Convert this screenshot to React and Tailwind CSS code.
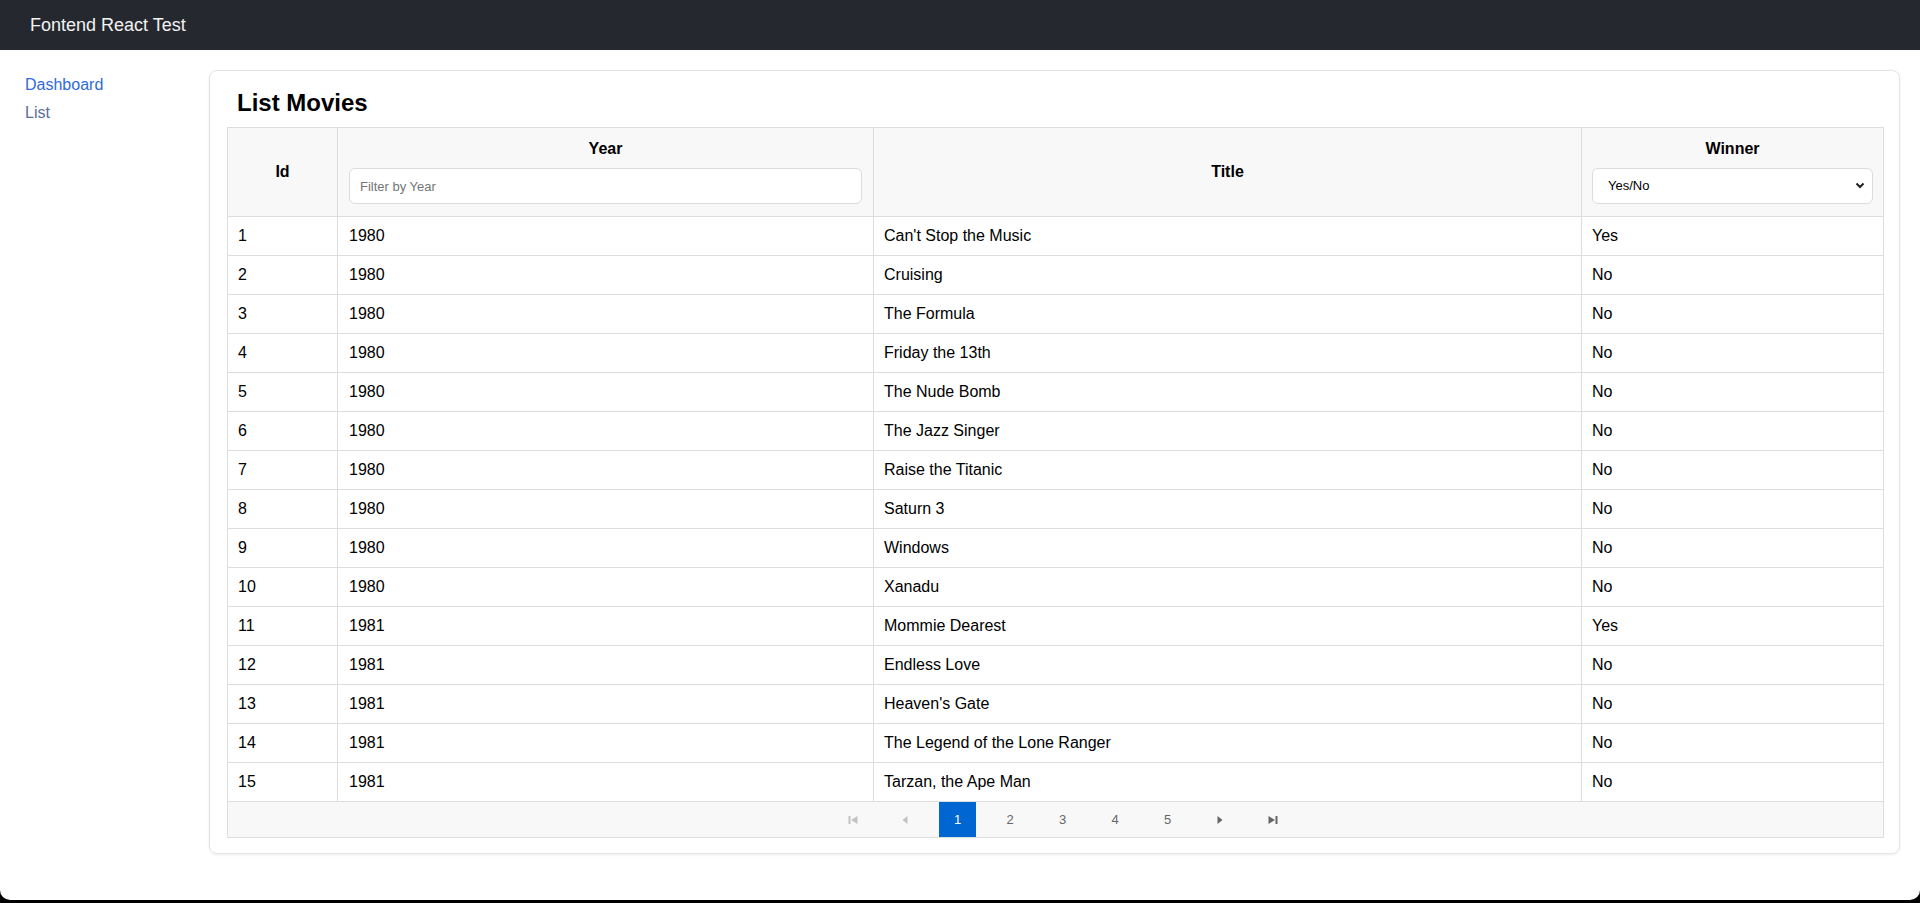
import React from 'react';

const movies = [
  [1, 1980, "Can't Stop the Music", 'Yes'],
  [2, 1980, 'Cruising', 'No'],
  [3, 1980, 'The Formula', 'No'],
  [4, 1980, 'Friday the 13th', 'No'],
  [5, 1980, 'The Nude Bomb', 'No'],
  [6, 1980, 'The Jazz Singer', 'No'],
  [7, 1980, 'Raise the Titanic', 'No'],
  [8, 1980, 'Saturn 3', 'No'],
  [9, 1980, 'Windows', 'No'],
  [10, 1980, 'Xanadu', 'No'],
  [11, 1981, 'Mommie Dearest', 'Yes'],
  [12, 1981, 'Endless Love', 'No'],
  [13, 1981, "Heaven's Gate", 'No'],
  [14, 1981, 'The Legend of the Lone Ranger', 'No'],
  [15, 1981, 'Tarzan, the Ape Man', 'No'],
];

const FirstIcon = () => (
  <svg width="10" height="10" viewBox="0 0 10 10" fill="currentColor">
    <rect x="0.5" y="1" width="2" height="8" />
    <path d="M9.5 1 L9.5 9 L3 5 Z" />
  </svg>
);
const PrevIcon = () => (
  <svg width="6" height="10" viewBox="0 0 6 10" fill="currentColor">
    <path d="M5.5 1 L5.5 9 L0.5 5 Z" />
  </svg>
);
const NextIcon = () => (
  <svg width="6" height="10" viewBox="0 0 6 10" fill="currentColor">
    <path d="M0.5 1 L0.5 9 L5.5 5 Z" />
  </svg>
);
const LastIcon = () => (
  <svg width="10" height="10" viewBox="0 0 10 10" fill="currentColor">
    <path d="M0.5 1 L0.5 9 L7 5 Z" />
    <rect x="7.5" y="1" width="2" height="8" />
  </svg>
);

const Pagination = () => (
  <div className="flex items-center justify-center gap-[15.5px] pl-[14px]">
    <button className="w-[37px] h-[35px] flex items-center justify-center text-[#c2c2c2]"><FirstIcon /></button>
    <button className="w-[37px] h-[35px] flex items-center justify-center text-[#c2c2c2]"><PrevIcon /></button>
    {[1, 2, 3, 4, 5].map((n) => (
      <button
        key={n}
        className={
          n === 1
            ? 'w-[37px] h-[35px] flex items-center justify-center text-[13px] bg-[#0066d1] text-white'
            : 'w-[37px] h-[35px] flex items-center justify-center text-[13px] text-[#666]'
        }
      >
        {n}
      </button>
    ))}
    <button className="w-[37px] h-[35px] flex items-center justify-center text-[#666]"><NextIcon /></button>
    <button className="w-[37px] h-[35px] flex items-center justify-center text-[#666]"><LastIcon /></button>
  </div>
);

export default function App() {
  return (
    <div className="bg-black h-[903px] overflow-hidden" style={{ fontFamily: '"Liberation Sans", Arial, sans-serif' }}>
      <div className="bg-white h-[900px] rounded-b-[10px] overflow-hidden">
        <header className="h-[50px] bg-[#25282f] flex items-center px-[30px]">
          <span className="text-[18px] text-[#f2f2f2] leading-7">Fontend React Test</span>
        </header>

        <div className="flex">
          <nav className="w-[189px] shrink-0 pl-[25px] pt-[23px] flex flex-col gap-1">
            <a href="#" className="text-[16px] leading-6 text-[#2f6bd8]">Dashboard</a>
            <a href="#" className="text-[16px] leading-6 text-[#5a6f93]">List</a>
          </nav>

          <main className="flex-1 min-w-0 pt-[20px] pl-[20px] pr-[20px]">
            <div className="border border-[#e4e4e4] rounded-lg shadow-[0_1px_3px_rgba(0,0,0,0.08)] px-[17px] pt-[18px] pb-[15px]">
              <h2 className="text-[24px] font-bold leading-7 pl-[10px] mb-[10px] text-black">List Movies</h2>

              <table className="w-full table-fixed border-collapse text-[16px] text-black">
                <colgroup>
                  <col className="w-[110px]" />
                  <col className="w-[536px]" />
                  <col className="w-[708px]" />
                  <col className="w-[302px]" />
                </colgroup>
                <thead>
                  <tr className="bg-[#f8f8f8]">
                    <th className="border border-[#dedede] font-bold align-middle">Id</th>
                    <th className="border border-[#dedede] font-bold px-[11px] pt-[11px] pb-[12px]">
                      <div className="leading-5 mb-[9px]">Year</div>
                      <input
                        type="text"
                        placeholder="Filter by Year"
                        className="w-full h-[36px] bg-white border border-[#dcdcdc] rounded-md px-[10px] text-[13px] font-normal placeholder:text-[#757575] outline-none"
                      />
                    </th>
                    <th className="border border-[#dedede] font-bold align-middle">Title</th>
                    <th className="border border-[#dedede] font-bold px-[10px] pt-[11px] pb-[12px]">
                      <div className="leading-5 mb-[9px]">Winner</div>
                      <div className="relative">
                        <select className="w-full h-[36px] appearance-none bg-white border border-[#dcdcdc] rounded-md pl-[15px] text-[13px] font-normal text-black outline-none">
                          <option>Yes/No</option>
                          <option>Yes</option>
                          <option>No</option>
                        </select>
                        <svg className="absolute right-[8px] top-[14px] pointer-events-none" width="10" height="7" viewBox="0 0 10 7" fill="none" stroke="#222" strokeWidth="2">
                          <path d="M1.5 1.5 L5 5 L8.5 1.5" />
                        </svg>
                      </div>
                    </th>
                  </tr>
                </thead>
                <tbody>
                  {movies.map(([id, year, title, winner]) => (
                    <tr key={id}>
                      <td className="border border-[#dedede] px-[10px] py-[9px] leading-5">{id}</td>
                      <td className="border border-[#dedede] px-[11px] py-[9px] leading-5">{year}</td>
                      <td className="border border-[#dedede] px-[10px] py-[9px] leading-5">{title}</td>
                      <td className="border border-[#dedede] px-[10px] py-[9px] leading-5">{winner}</td>
                    </tr>
                  ))}
                </tbody>
                <tfoot>
                  <tr className="bg-[#f8f8f8]">
                    <td colSpan={4} className="border border-[#dedede] p-0">
                      <Pagination />
                    </td>
                  </tr>
                </tfoot>
              </table>
            </div>
          </main>
        </div>
      </div>
    </div>
  );
}
